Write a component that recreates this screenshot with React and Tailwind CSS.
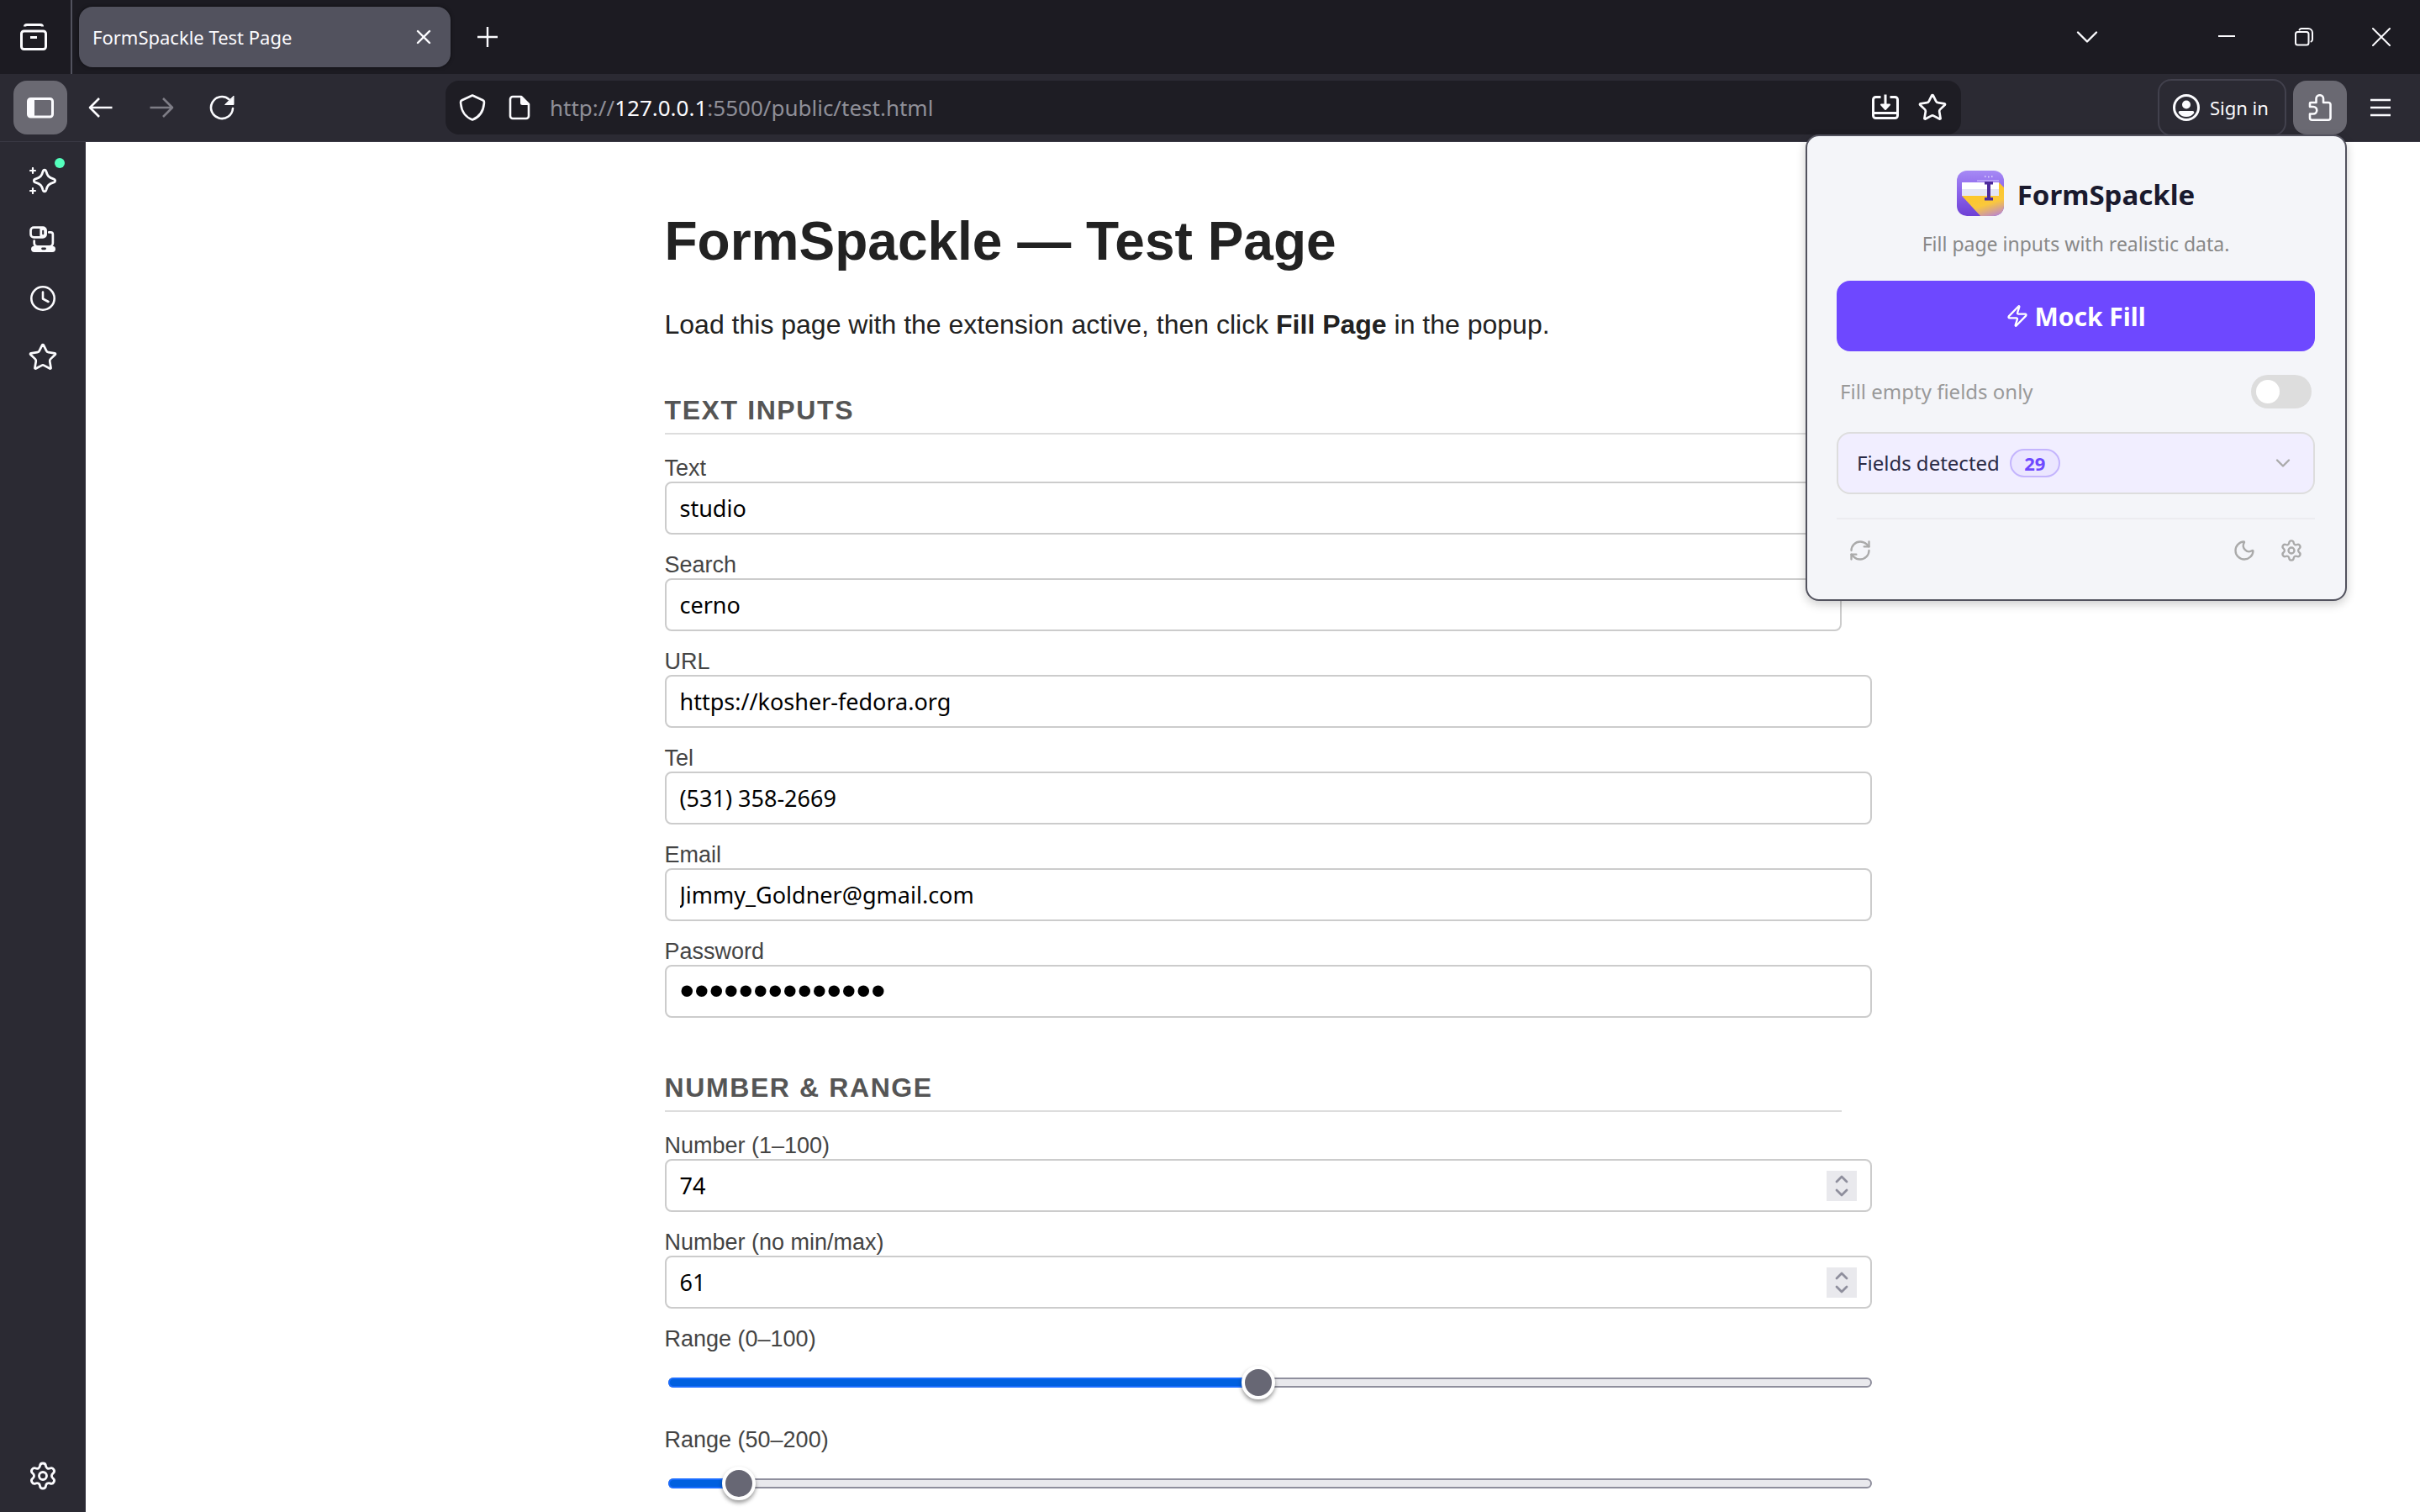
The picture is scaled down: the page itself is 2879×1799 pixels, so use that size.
import { useState } from "react";
import { ChevronDown, ChevronUp, Moon, RefreshCw, Settings, Star, Zap } from "lucide-react";

const SEGOE = "font-['Noto_Sans',sans-serif]";
const ARIAL = "font-['Liberation_Sans',Arial,sans-serif]";

function Icon({ size = 32, box = "0 0 32 32", width = 2.6, className = "", children }) {
  return (
    <svg
      width={size}
      height={size}
      viewBox={box}
      fill="none"
      stroke="currentColor"
      strokeWidth={width}
      strokeLinecap="round"
      strokeLinejoin="round"
      className={className}
      aria-hidden="true"
    >
      {children}
    </svg>
  );
}

const RecentIcon = () => (
  <Icon width={3}>
    <path d="M5.5 3.5C5.5 2 6.5 1.5 8 1.5H24C25.500 1.500 26.500 2 26.500 3.500" strokeLinecap="butt" />
    <rect x="1.500" y="9" width="29" height="21.500" rx="3" />
    <path d="M12 16.500H20" strokeLinecap="butt" />
  </Icon>
);

const SidebarIcon = () => (
  <Icon width={3}>
    <rect x="1.500" y="5.500" width="29" height="21.500" rx="3" />
    <path d="M3 7H7.500V25.500H3z" fill="currentColor" />
  </Icon>
);

const BackIcon = () => (
  <Icon>
    <path d="M29.500 16H3.500M14 5L3 16L14 27" strokeLinecap="butt" />
  </Icon>
);

const ForwardIcon = () => (
  <Icon>
    <path d="M2.500 16H28.500M18 5L29 16L18 27" strokeLinecap="butt" />
  </Icon>
);

const ReloadIcon = () => (
  <Icon>
    <path d="M29 17A13 13 0 1 1 24.500 6.200" />
    <path d="M30 2.500V12.500H20z" fill="currentColor" strokeWidth="1" />
  </Icon>
);

const ShieldIcon = () => (
  <Icon>
    <path d="M16 1.500L28.500 7.200C30.500 8 30 9.500 29.800 11.500C29 20 25 27 16 30.500C7 27 3 20 2.200 11.500C2 9.500 1.500 8 3.500 7.200z" />
  </Icon>
);

const DocumentIcon = () => (
  <Icon width={2.6}>
    <path d="M18 3H8A3 3 0 0 0 5 6V26A3 3 0 0 0 8 29H24A3 3 0 0 0 27 26V12z" />
    <path d="M18 3V10.500A1.500 1.500 0 0 0 19.500 12H27z" fill="currentColor" strokeWidth="2" />
  </Icon>
);

const SaveIcon = () => (
  <Icon width={3}>
    <path d="M10.500 3.500H4.500A3 3 0 0 0 1.500 6.500V25.500A3 3 0 0 0 4.500 28.500H27.500A3 3 0 0 0 30.500 25.500V6.500A3 3 0 0 0 27.500 3.500H21.500M2 22.500H30M16 0.500V14" strokeLinecap="butt" />
    <path d="M11 12.500H21L16 18z" fill="currentColor" strokeWidth="2" />
  </Icon>
);

const AccountIcon = () => (
  <Icon>
    <circle cx="16" cy="16" r="14.500" strokeWidth="3" />
    <circle cx="16" cy="12.500" r="5" fill="currentColor" stroke="none" />
    <path
      d="M8.500 20H23.500A1.800 1.800 0 0 1 25 22.800C23 25.600 19.800 27 16 27S9 25.600 7 22.800A1.800 1.800 0 0 1 8.500 20z"
      fill="currentColor"
      stroke="none"
    />
  </Icon>
);

const PuzzleIcon = () => (
  <Icon>
    <path d="M5 10H11.500V5.500A4.200 4.200 0 0 1 20 5.500V10H26A2.500 2.500 0 0 1 28.500 12.500V28.200A2.500 2.500 0 0 1 26 30.700H6.500A2.500 2.500 0 0 1 4 28.200V23.500H8A4.200 4.200 0 0 0 8 15H4V11A1 1 0 0 1 5 10z" />
  </Icon>
);

const SparkleIcon = () => (
  <Icon width={2.8}>
    <path d="M18 3.200C19.300 3.200 19.700 4.200 20 5.200C21.300 10 23 12.300 28.600 13.800C31.300 14.600 31.300 17.400 28.600 18.200C23 19.700 21.300 22 20 26.800C19.700 27.800 19.300 28.800 18 28.800S16.300 27.800 16 26.800C14.700 22 13 19.700 7.400 18.200C4.700 17.400 4.700 14.600 7.400 13.800C13 12.300 14.700 10 16 5.200C16.300 4.200 16.700 3.200 18 3.200z" />
    <path d="M4 1V7M1 4H7M4 25V31M1 28H7" strokeWidth="2.200" />
  </Icon>
);

const DevicesIcon = () => (
  <Icon width={2.6} box="0 0 31 31">
    <rect x="1.500" y="1.500" width="17.500" height="11.500" rx="3.500" />
    <path d="M12 1.500H15.500A3.500 3.500 0 0 1 19 5V9.500A3.500 3.500 0 0 1 15.500 13H12z" fill="currentColor" stroke="none" />
    <path d="M15.700 5.500V9" stroke="#2b2a33" strokeWidth="2" />
    <path d="M22.500 7.200H24.500A2.500 2.500 0 0 1 27 9.700V19.500A4 4 0 0 1 23 23.500H9A4 4 0 0 1 5.500 19.500V17" />
    <rect x="2" y="23" width="28" height="7" rx="3.500" fill="currentColor" stroke="none" />
    <path d="M15 26H18" stroke="#2b2a33" strokeWidth="2.600" />
  </Icon>
);

const ClockIcon = () => (
  <Icon>
    <circle cx="16" cy="16" r="13.700" />
    <path d="M16 8.500V16.500L22.500 20" />
  </Icon>
);

const Logo = () => (
  <svg width="56" height="56" viewBox="0 0 56 56" aria-hidden="true">
    <defs>
      <linearGradient id="tile" x1="0" y1="0" x2="0" y2="1">
        <stop offset="0" stopColor="#a78bf5" />
        <stop offset="0.500" stopColor="#8a62ea" />
        <stop offset="1" stopColor="#6d3fd4" />
      </linearGradient>
      <linearGradient id="glow" x1="0.300" y1="0" x2="0.700" y2="1">
        <stop offset="0" stopColor="#ffc61a" />
        <stop offset="0.650" stopColor="#fac83c" />
        <stop offset="1" stopColor="#c08bc4" />
      </linearGradient>
      <linearGradient id="field" x1="0" y1="0" x2="0" y2="1">
        <stop offset="0.500" stopColor="#ffffff" />
        <stop offset="0.520" stopColor="#e4e6f5" />
      </linearGradient>
      <clipPath id="round">
        <rect width="56" height="54" y="1" rx="12" />
      </clipPath>
    </defs>
    <g clipPath="url(#round)">
      <rect width="56" height="56" fill="url(#tile)" />
      <path d="M6 31L29 56H56V21L50 15z" fill="url(#glow)" />
      <rect x="6" y="15" width="44" height="16" fill="url(#field)" />
      <path d="M24 13H50" stroke="#d9ccff" strokeWidth="1" />
      <path d="M33 8h1.500M37 8.500h1.500M41 8h1.500" stroke="#e6dcff" strokeWidth="1.500" />
      <path d="M33 14H43V17.500H40V33H43V36.500H33V33H36V17.500H33z" fill="#4d2b9c" />
    </g>
  </svg>
);

function ToolButton({ label, className = "", children }) {
  return (
    <button type="button" aria-label={label} className={`flex size-16 shrink-0 items-center justify-center rounded-2xl ${className}`}>
      {children}
    </button>
  );
}

function TabBar() {
  return (
    <header className="flex h-[88px] shrink-0 items-center bg-[#1c1b22]">
      <button type="button" aria-label="Recent browsing" className="flex h-full w-[86px] items-center justify-center border-r-2 border-[#52525e] pr-1">
        <RecentIcon />
      </button>
      <div className="ml-2 flex h-18 w-[442px] items-center justify-between rounded-2xl bg-[#52525e] px-4 shadow-[0_0_4px_rgba(0,0,0,0.5)]">
        <span className="text-[22px]">FormSpackle Test Page</span>
        <button type="button" aria-label="Close tab" className="flex size-8 items-center justify-center">
          <Icon size={18} box="0 0 18 18" width={2.4}>
            <path d="M2 2L16 16M16 2L2 16" />
          </Icon>
        </button>
      </div>
      <button type="button" aria-label="New tab" className="ml-3 flex size-16 items-center justify-center">
        <Icon size={26} box="0 0 26 26" width={2.4}>
          <path d="M13 1V25M1 13H25" strokeLinecap="butt" />
        </Icon>
      </button>
      <div className="ml-auto flex h-full items-center">
        <button type="button" aria-label="List all tabs" className="mr-[88px] flex size-16 items-center justify-center">
          <Icon size={26} box="0 0 26 26" width={2.4}>
            <path d="M2 7.500L13 18.500L24 7.500" />
          </Icon>
        </button>
        <button type="button" aria-label="Minimize" className="flex h-full w-[92px] items-center justify-center">
          <Icon size={20} box="0 0 20 20" width={2}>
            <path d="M0 9H20" strokeLinecap="butt" />
          </Icon>
        </button>
        <button type="button" aria-label="Restore" className="flex h-full w-[92px] items-center justify-center">
          <Icon size={22} box="0 0 22 22" width={2}>
            <rect x="1" y="5" width="15.500" height="15.500" rx="2.500" />
            <path d="M5.500 2.500A3 3 0 0 1 8 1H16A5 5 0 0 1 21 6V14A3 3 0 0 1 19.500 16.500" />
          </Icon>
        </button>
        <button type="button" aria-label="Close window" className="flex h-full w-[92px] items-center justify-center">
          <Icon size={22} box="0 0 22 22" width={2}>
            <path d="M1 1L21 21M21 1L1 21" />
          </Icon>
        </button>
      </div>
    </header>
  );
}

function Toolbar() {
  return (
    <nav className="flex h-[81px] shrink-0 items-center gap-2 border-b border-[#3a3944] bg-[#2b2a33] pl-4 pr-[15px]">
      <ToolButton label="Sidebar" className="bg-[#6a6972]"><SidebarIcon /></ToolButton>
      <ToolButton label="Back"><BackIcon /></ToolButton>
      <ToolButton label="Forward" className="text-[#7e7d86]"><ForwardIcon /></ToolButton>
      <ToolButton label="Reload"><ReloadIcon /></ToolButton>
      <div className="mx-[226px] flex h-16 min-w-0 flex-1 items-center rounded-2xl bg-[#1e1d24] px-4">
        <button type="button" aria-label="Tracking protection"><ShieldIcon /></button>
        <button type="button" aria-label="Site information" className="ml-6"><DocumentIcon /></button>
        <div className="ml-5 flex-1 truncate text-[26px] text-[#8f8f98]">
          http://<span className="text-[#fbfbfe]">127.0.0.1</span>:5500/public/test.html
        </div>
        <button type="button" aria-label="Install page" className="mr-[22px]"><SaveIcon /></button>
        <button type="button" aria-label="Bookmark"><Star size={36} strokeWidth={1.8} /></button>
      </div>
      <button type="button" className="flex h-[68px] w-[153px] shrink-0 items-center gap-3 rounded-2xl border-2 border-[#42414d] px-4 text-[22px] whitespace-nowrap">
        <AccountIcon />
        Sign in
      </button>
      <ToolButton label="Extensions" className="bg-[#6a6972]"><PuzzleIcon /></ToolButton>
      <ToolButton label="Menu">
        <Icon size={24} box="0 0 24 24" width={2.4}>
          <path d="M0 3H24M0 12H24M0 21H24" strokeLinecap="butt" />
        </Icon>
      </ToolButton>
    </nav>
  );
}

function SideButton({ label, children }) {
  return (
    <button type="button" aria-label={label} className="relative flex h-[70px] w-full items-center justify-center">
      {children}
    </button>
  );
}

function Sidebar() {
  return (
    <aside className="flex w-[102px] shrink-0 flex-col border-r border-[#3a3944] bg-[#2b2a33] pb-2 pt-[11px]">
      <SideButton label="AI chatbot">
        <SparkleIcon />
        <span className="absolute right-6 top-2 size-3 rounded-full bg-[#54ffbd]" />
      </SideButton>
      <SideButton label="Synced tabs"><DevicesIcon /></SideButton>
      <SideButton label="History"><ClockIcon /></SideButton>
      <SideButton label="Bookmarks"><Star size={36} strokeWidth={1.8} /></SideButton>
      <div className="mt-auto">
        <SideButton label="Customize sidebar"><Settings size={36} strokeWidth={1.9} /></SideButton>
      </div>
    </aside>
  );
}

const labelBase = "block text-[27px] leading-8 text-[#444]";
const inputBase = `${SEGOE} h-[63px] rounded-lg border-2 border-[#ccc] bg-white px-4 text-[27px] text-black outline-none`;

function Field({ id, label, type, value, full }) {
  return (
    <div className="mb-5">
      <label htmlFor={id} className={labelBase}>{label}</label>
      <input
        id={id}
        type={type}
        defaultValue={value}
        className={`${inputBase} block ${full ? "w-full" : "w-[calc(100%+36px)]"} [&::-webkit-search-cancel-button]:appearance-none`}
      />
    </div>
  );
}

function PasswordField() {
  return (
    <div>
      <label htmlFor="password" className={labelBase}>Password</label>
      <input
        id="password"
        type="password"
        defaultValue="k8Wq2ZrT5mLx9v"
        className="block h-[63px] w-[calc(100%+36px)] rounded-lg border-2 border-[#ccc] bg-white px-4 font-['Liberation_Sans',sans-serif] text-[50px] text-black outline-none"
      />
    </div>
  );
}

function NumberField({ id, label, value, min, max }) {
  return (
    <div className="mb-5">
      <label htmlFor={id} className={labelBase}>{label}</label>
      <div className="relative w-[calc(100%+36px)]">
        <input
          id={id}
          type="number"
          min={min}
          max={max}
          defaultValue={value}
          className={`${inputBase} block w-full [&::-webkit-inner-spin-button]:appearance-none`}
        />
        <div className="absolute inset-y-0 right-[18px] flex items-center">
          <div className="flex size-9 flex-col items-center justify-center bg-[#e9e9ed] text-[#8f8f9d]">
            <button type="button" aria-label={`Increase ${label}`}><ChevronUp size={24} strokeWidth={2.8} className="-my-1" /></button>
            <button type="button" aria-label={`Decrease ${label}`}><ChevronDown size={24} strokeWidth={2.8} className="-my-1" /></button>
          </div>
        </div>
      </div>
    </div>
  );
}

function RangeField({ id, label, min, max, initial }) {
  const [value, setValue] = useState(initial);
  const percent = ((value - min) / (max - min)) * 100;
  return (
    <div className="mb-5">
      <label htmlFor={id} className={labelBase}>{label}</label>
      <div className="ml-1 mt-1 grid h-16 w-[calc(100%+32px)] items-center">
        <div className="col-start-1 row-start-1 h-3 rounded-full border-2 border-[#8f8f9d] bg-[#e9e9ed]" />
        <div
          className="col-start-1 row-start-1 h-3 min-w-5 rounded-l-full border-2 border-r-0 border-[#1a6dff] bg-[#0060df]"
          style={{ width: `${percent}%` }}
        />
        <input
          id={id}
          type="range"
          min={min}
          max={max}
          value={value}
          onChange={(e) => setValue(Number(e.target.value))}
          className="col-start-1 row-start-1 m-0 h-10 w-full appearance-none bg-transparent [&::-webkit-slider-thumb]:size-10 [&::-webkit-slider-thumb]:appearance-none [&::-webkit-slider-thumb]:rounded-full [&::-webkit-slider-thumb]:border-4 [&::-webkit-slider-thumb]:border-white [&::-webkit-slider-thumb]:bg-[#676774] [&::-webkit-slider-thumb]:shadow-[0_3px_5px_rgba(0,0,0,0.4)]"
        />
      </div>
    </div>
  );
}

function SectionTitle({ children }) {
  return (
    <h2 className="mb-6 mt-[65px] border-b-2 border-[#ddd] pb-2 text-[32px] font-bold uppercase leading-[37px] tracking-wider text-[#555]">
      {children}
    </h2>
  );
}

function TestPage() {
  return (
    <main className={`${ARIAL} min-w-0 flex-1 overflow-hidden bg-white text-[#222]`}>
      <form className="mx-auto max-w-[1400px] pt-20" onSubmit={(e) => e.preventDefault()}>
        <h1 className="text-[64px] font-bold leading-[76px]">FormSpackle — Test Page</h1>
        <p className="mt-[42px] text-[32px] leading-[38px]">
          Load this page with the extension active, then click <strong>Fill Page</strong> in the popup.
        </p>
        <SectionTitle>Text inputs</SectionTitle>
        <Field id="text" label="Text" type="text" value="studio" />
        <Field id="search" label="Search" type="search" value="cerno" full />
        <Field id="url" label="URL" type="url" value="https://kosher-fedora.org" />
        <Field id="tel" label="Tel" type="tel" value="(531) 358-2669" />
        <Field id="email" label="Email" type="email" value="Jimmy_Goldner@gmail.com" />
        <PasswordField />
        <SectionTitle>Number &amp; range</SectionTitle>
        <NumberField id="number" label="Number (1–100)" value={74} min={1} max={100} />
        <NumberField id="number-free" label="Number (no min/max)" value={61} />
        <RangeField id="range" label="Range (0–100)" min={0} max={100} initial={49} />
        <RangeField id="range-wide" label="Range (50–200)" min={50} max={200} initial={57} />
      </form>
    </main>
  );
}

function Popup() {
  return (
    <section
      aria-label="FormSpackle"
      className="absolute right-[87px] top-[160px] w-[644px] rounded-2xl border-2 border-[#52525e] bg-[#f4f5f9] pl-[35px] pr-9 pb-[30px] pt-10 shadow-[0_4px_12px_rgba(0,0,0,0.2)]"
    >
      <div className="flex items-center justify-center gap-4">
        <Logo />
        <h2 className="pt-1 text-[33px] font-bold leading-[52px] text-[#1a1a2e]">FormSpackle</h2>
      </div>
      <p className="mt-4 text-center text-[23px] leading-8 text-[#888]">Fill page inputs with realistic data.</p>
      <button type="button" className="mt-7 flex h-[84px] w-full items-center justify-center gap-1.5 rounded-2xl bg-[#6e48ff] text-[30px] font-bold text-white">
        <Zap size={28} strokeWidth={2} />
        Mock Fill
      </button>
      <label className="mt-7 flex h-10 items-center justify-between px-1 text-[24px] text-[#999]">
        Fill empty fields only
        <input
          type="checkbox"
          role="switch"
          className="h-10 w-18 appearance-none rounded-full bg-[#ddd] p-1.5 before:block before:size-7 before:rounded-full before:bg-white checked:bg-[#6e48ff] checked:before:ml-8"
        />
      </label>
      <button type="button" aria-expanded="false" className="mt-7 flex h-[74px] w-full items-center rounded-2xl border-2 border-[#ddd] bg-[#f1eeff] pl-[22px] pr-[22px] text-[24px] text-[#2a2a45]">
        Fields detected
        <span className="ml-3 flex h-[34px] w-15 items-center justify-center rounded-full border-2 border-[#c4b5fd] bg-[#ebe6ff] text-[22px] font-bold text-[#6e48ff]">
          29
        </span>
        <ChevronDown size={28} strokeWidth={2} className="ml-auto text-[#aaa]" />
      </button>
      <div className="mt-7 flex border-t-2 border-[#ececf0] pt-[9px] text-[#aaa]">
        <button type="button" aria-label="Rescan fields" className="flex size-14 items-center justify-center"><RefreshCw size={28} /></button>
        <button type="button" aria-label="Dark mode" className="ml-auto flex size-14 items-center justify-center"><Moon size={28} /></button>
        <button type="button" aria-label="Settings" className="flex size-14 items-center justify-center"><Settings size={28} /></button>
      </div>
    </section>
  );
}

export default function App() {
  return (
    <div className={`${SEGOE} relative flex h-screen flex-col overflow-hidden bg-[#2b2a33] text-[#fbfbfe]`}>
      <TabBar />
      <Toolbar />
      <div className="flex min-h-0 flex-1">
        <Sidebar />
        <TestPage />
      </div>
      <Popup />
    </div>
  );
}
